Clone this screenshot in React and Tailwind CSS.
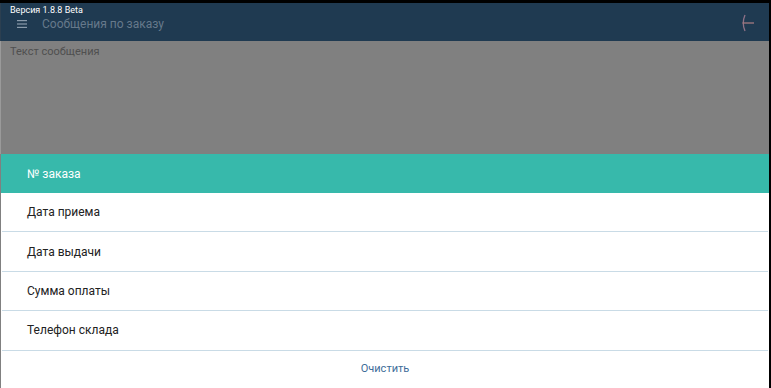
import React from 'react';

const items = ['Дата приема', 'Дата выдачи', 'Сумма оплаты', 'Телефон склада'];

const App = () => {
  return (
    <div
      className="w-[771px] h-[388px] bg-black pt-[3px] pr-[2px] flex flex-col overflow-hidden"
      style={{ fontFamily: 'Roboto, "Liberation Sans", sans-serif' }}
    >
      {/* Header (dimmed by overlay) */}
      <div className="h-[38px] bg-[#1f3a51] relative flex items-center pl-[16px] pr-[14px] border-l border-[#2c3f50]">
        <div className="absolute left-[9px] top-[1px] text-[9px] leading-[12px] text-white">Версия 1.8.8 Beta</div>
        <div className="flex items-center gap-[15px] mt-[4px]">
          <svg width="10" height="8" viewBox="0 0 10 8" className="text-[#8a9bab]">
            <rect x="0" y="0" width="10" height="1.2" fill="currentColor" />
            <rect x="0" y="3.4" width="10" height="1.2" fill="currentColor" />
            <rect x="0" y="6.8" width="10" height="1.2" fill="currentColor" />
          </svg>
          <span className="text-[12px] text-[#66798b]">Сообщения по заказу</span>
        </div>
        <svg width="14" height="18" viewBox="0 0 14 18" className="ml-auto mt-[1px]">
          <path d="M4 1 Q0.5 9 4 17" stroke="#8f7287" strokeWidth="1.3" fill="none" />
          <path d="M1.5 9 H13" stroke="#a57a80" strokeWidth="1.3" fill="none" />
        </svg>
      </div>

      {/* Dimmed content */}
      <div className="h-[113px] bg-[#808080] border-l border-[#9a9a9a] px-[9px] pt-[3px]">
        <div className="text-[11px] text-[#4f4f4f]">Текст сообщения</div>
      </div>

      {/* Bottom sheet */}
      <div className="flex-1 bg-white border-l border-[#808080] flex flex-col">
        <div className="h-[39px] bg-[#37b9ab] flex items-center pl-[26px] text-[12px] text-white">№ заказа</div>
        {items.map((t) => (
          <div key={t} className="h-[39.4px] shrink-0 border-b border-[#c9dbe6] mx-[1px] flex items-center pl-[25px] text-[12px] text-[#222]">
            {t}
          </div>
        ))}
        <div className="flex-1 flex items-center justify-center text-[11px] text-[#3d6c99]">Очистить</div>
      </div>
    </div>
  );
};

export default App;
